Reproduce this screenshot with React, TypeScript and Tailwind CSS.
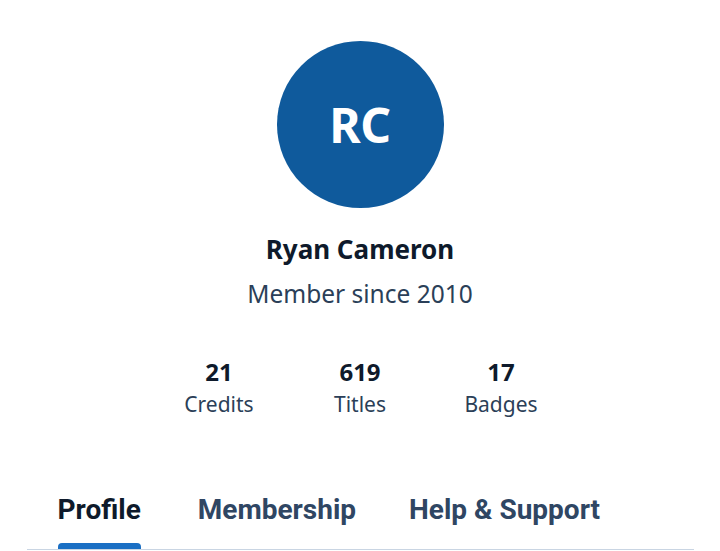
import React from "react";

const stats = [
  { value: "21", label: "Credits" },
  { value: "619", label: "Titles" },
  { value: "17", label: "Badges" },
];

const tabs = ["Profile", "Membership", "Help & Support"];

export default function App() {
  return (
    <div className="w-[720px] h-[551px] bg-white overflow-hidden flex flex-col items-center font-['Noto_Sans',sans-serif]">
      {/* Avatar */}
      <div className="mt-[41px] size-[167px] rounded-full bg-[#0f5a9c] flex items-center justify-center">
        <span className="text-white text-[48px] font-bold leading-none tracking-[-0.5px]">RC</span>
      </div>

      <h1 className="mt-[25px] text-[26px] leading-[32px] font-bold text-[#0e1a2b]">Ryan Cameron</h1>
      <p className="mt-[13px] text-[24.5px] leading-[32px] text-[#2b3f58]">Member since 2010</p>

      {/* Stats */}
      <div className="mt-[46px] flex">
        {stats.map((s) => (
          <div key={s.label} className="w-[141px] flex flex-col items-center">
            <span className="text-[24px] leading-[32px] font-bold text-[#0e1a2b]">{s.value}</span>
            <span className="text-[21px] leading-[32px] text-[#2b3f58]">{s.label}</span>
          </div>
        ))}
      </div>

      {/* Tabs */}
      <div className="mt-auto w-[667px] border-b border-[#c9d5e3] flex gap-[53px] pl-[31px] font-['Roboto',sans-serif]">
        {tabs.map((t, i) => (
          <div key={t} className={`flex flex-col ${i === 0 ? "mr-[4px]" : ""}`}>
            <span
              className={`text-[28px] leading-[36px] font-bold pb-[15px] ${
                i === 0 ? "text-[#0e1a2b]" : "text-[#2f4663]"
              }`}
            >
              {t}
            </span>
            <div className={`h-[6px] rounded-t-[4px] ${i === 0 ? "bg-[#1a6fc4]" : "bg-transparent"}`}></div>
          </div>
        ))}
      </div>
      <div className="h-[1px]"></div>
    </div>
  );
}
